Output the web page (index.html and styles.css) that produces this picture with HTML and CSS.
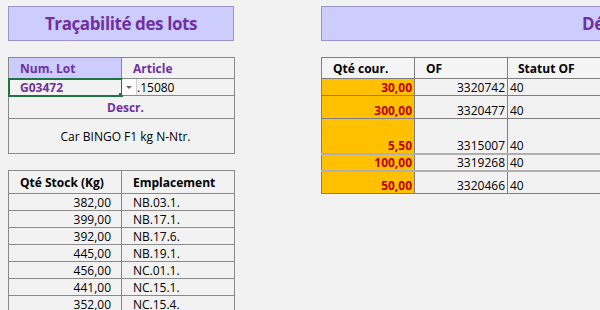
FILE: index.html
```html
<!DOCTYPE html>
<html lang="fr">
<head>
<meta charset="utf-8">
<title>Traçabilité des lots</title>
<link rel="stylesheet" href="styles.css">
</head>
<body>
<div class="sheet">
  <section class="left">
    <div class="title">Traçabilité des lots</div>
    <table class="grid lot">
      <colgroup><col class="c113"><col class="c113"></colgroup>
      <tr class="h21">
        <th class="lav">Num. Lot</th>
        <th>Article</th>
      </tr>
      <tr class="h17">
        <td class="sel">G03472<span class="handle"></span></td>
        <td class="article"><span class="dd"><span class="tri"></span></span>.15080</td>
      </tr>
      <tr class="h23">
        <th colspan="2" class="center">Descr.</th>
      </tr>
      <tr class="h35">
        <td colspan="2" class="center mid">Car BINGO F1 kg N-Ntr.</td>
      </tr>
    </table>
    <table class="grid stock">
      <colgroup><col class="c113"><col class="c113"></colgroup>
      <tr class="h23">
        <th class="dark">Qté Stock (Kg)</th>
        <th class="dark">Emplacement</th>
      </tr>
      <tr class="h17"><td class="num">382,00</td><td class="loc">NB.03.1.</td></tr>
      <tr class="h17"><td class="num">399,00</td><td class="loc">NB.17.1.</td></tr>
      <tr class="h17"><td class="num">392,00</td><td class="loc">NB.17.6.</td></tr>
      <tr class="h17"><td class="num">445,00</td><td class="loc">NB.19.1.</td></tr>
      <tr class="h17"><td class="num">456,00</td><td class="loc">NC.01.1.</td></tr>
      <tr class="h17"><td class="num">441,00</td><td class="loc">NC.15.1.</td></tr>
      <tr class="h17"><td class="num">352,00</td><td class="loc">NC.15.4.</td></tr>
    </table>
  </section>
  <section class="right">
    <div class="title wide">Détail des OF en cours</div>
    <table class="grid of">
      <colgroup><col class="c93"><col class="c93"><col class="c120"></colgroup>
      <tr class="h21">
        <th class="dark">Qté cour.</th>
        <th class="dark">OF</th>
        <th class="dark">Statut OF</th>
      </tr>
      <tr class="h17"><td class="qty">30,00</td><td class="num of-n">3320742</td><td class="stat">40</td></tr>
      <tr class="h23"><td class="qty">300,00</td><td class="num of-n">3320477</td><td class="stat">40</td></tr>
      <tr class="h35"><td class="qty">5,50</td><td class="num of-n">3315007</td><td class="stat">40</td></tr>
      <tr class="h17 dbl"><td class="qty">100,00</td><td class="num of-n">3319268</td><td class="stat">40</td></tr>
      <tr class="h23 dbl"><td class="qty">50,00</td><td class="num of-n">3320466</td><td class="stat">40</td></tr>
    </table>
  </section>
</div>
</body>
</html>
```
FILE: styles.css
```css
html, body {
  margin: 0;
  padding: 0;
  background: #f2f2f2;
  overflow: hidden;
}
body {
  width: 600px;
  height: 310px;
  font-family: "Open Sans", "Noto Sans", sans-serif;
  font-size: 12px;
  color: #000;
}
.sheet {
  display: flex;
  gap: 87px;
  padding: 6px 0 0 8px;
  height: 304px;
  overflow: hidden;
}
.left {
  width: 226px;
  flex: none;
  display: flex;
  flex-direction: column;
  gap: 16px;
}
.right {
  flex: none;
  width: 279px;
  overflow: hidden;
  display: flex;
  flex-direction: column;
  gap: 16px;
}
.left > *, .right > * { flex-shrink: 0; }
.title {
  box-sizing: border-box;
  height: 35px;
  background: #ccccff;
  border: 1px solid #9d94cf;
  color: #7030a0;
  font-weight: bold;
  font-size: 17px;
  letter-spacing: -0.4px;
  line-height: 33px;
  text-align: center;
  white-space: nowrap;
  overflow: hidden;
}
.title.wide {
  text-align: left;
  padding-left: 260px;
  border-right: none;
}
.grid {
  border-collapse: collapse;
  table-layout: fixed;
}
.grid td, .grid th {
  border: 1px solid #8a8a8a;
  padding: 0 3px 0 11px;
  white-space: nowrap;
  overflow: hidden;
  line-height: 15px;
}
.grid th {
  text-align: left;
  font-weight: bold;
  color: #7030a0;
  vertical-align: middle;
}
.grid th.dark { color: #000; }
.grid td { vertical-align: bottom; }
.c113 { width: 113px; }
.c93 { width: 93px; }
.c120 { width: 120px; }
.lot { width: 226px; }
.stock { width: 226px; }
.of { width: 306px; }
.h17 { height: 17px; }
.h21 { height: 21px; }
.h23 { height: 23px; }
.h35 { height: 35px; }
.lav { background: #ccccff; }
.center { text-align: center !important; }
.mid { vertical-align: middle !important; }
.sel {
  position: relative;
  outline: 2px solid #217346;
  outline-offset: -1px;
  color: #7030a0;
  font-weight: bold;
}
.handle {
  position: absolute;
  right: -3px;
  bottom: -3px;
  width: 4px;
  height: 4px;
  background: #217346;
  border: 1px solid #fff;
}
.article {
  position: relative;
  padding-left: 15px !important;
}
.dd {
  position: absolute;
  left: 0;
  top: 0;
  width: 14px;
  height: 16px;
  background: #fff;
  border-right: 1px solid #d0d0d0;
  display: flex;
  align-items: center;
  justify-content: center;
}
.tri {
  width: 0;
  height: 0;
  border-left: 3px solid transparent;
  border-right: 3px solid transparent;
  border-top: 3px solid #666;
}
.grid td.num {
  text-align: right;
  padding-right: 10px;
  padding-left: 3px;
}
.grid td.loc { padding-left: 11px; }
.grid td.qty {
  background: #ffc000;
  color: #c00000;
  font-weight: bold;
  text-align: right;
  padding-right: 2px;
}
.grid td.of-n { padding-right: 2px; }
.grid td.stat { padding-left: 2px; }
.of tr.dbl td { border-top: 2px solid #b0b0b0; }
.of td, .of th { border-color: #7f7f7f; }
.of th { background: #f4f4f4; }
.of th:nth-child(3) { padding-left: 10px; }
```
